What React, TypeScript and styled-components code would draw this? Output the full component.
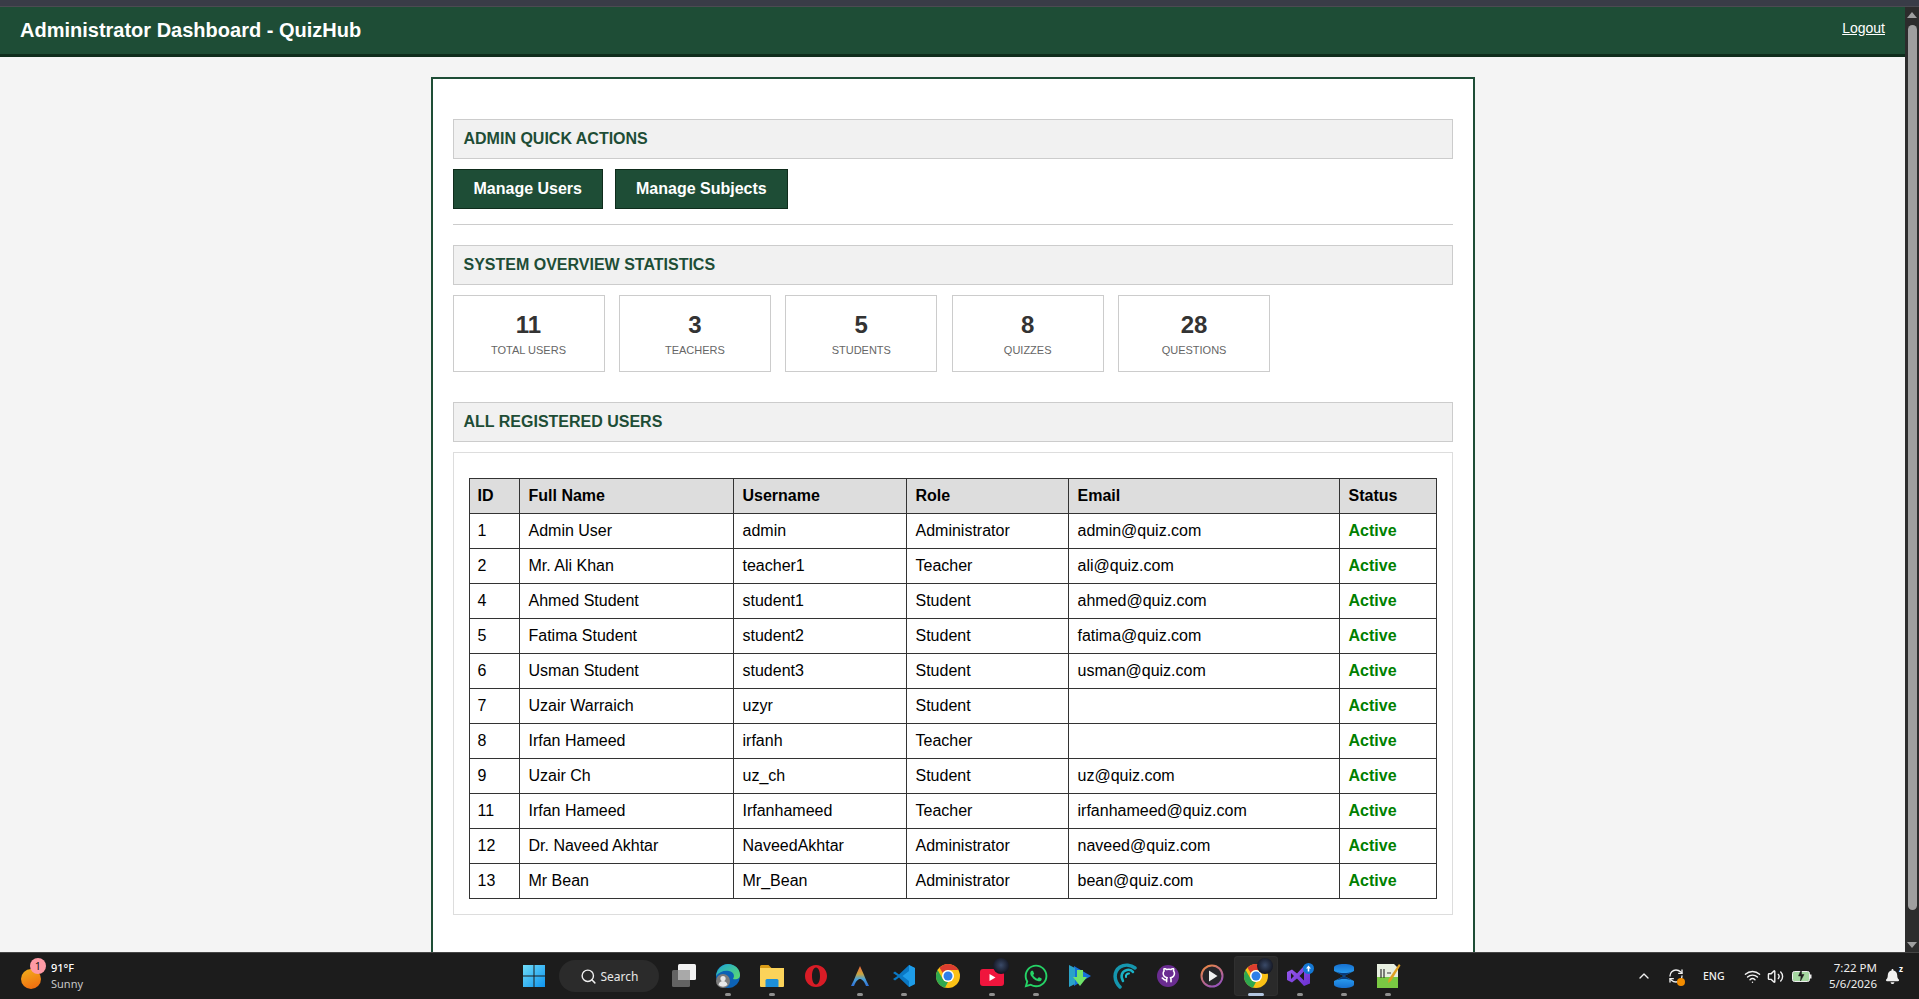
import React from "react";
import styled, { createGlobalStyle } from "styled-components";
import { FaWhatsapp, FaBell } from "react-icons/fa";
import { FiGithub } from "react-icons/fi";
import { ChevronUp, RefreshCw, Search, Wifi, Volume2 } from "lucide-react";

const GlobalStyle = createGlobalStyle`
  html, body {
    margin: 0;
    padding: 0;
    height: 100%;
    overflow: hidden;
    background: #1c1c1c;
  }
  * {
    box-sizing: border-box;
  }
`;

const green = "#1e4d36";
const darkGreen = "#0f2c1c";

const Screen = styled.div`
  width: 100vw;
  height: 100vh;
  display: flex;
  flex-direction: column;
  overflow: hidden;
  font-family: "Liberation Sans", Arial, sans-serif;
`;
const TopStrip = styled.div`
  flex: 0 0 7px;
  background: #393c47;
  border-bottom: 1px solid #4b4b52;
`;
const Viewport = styled.div`
  flex: 1;
  min-height: 0;
  display: flex;
`;
const Page = styled.div`
  flex: 1;
  min-width: 0;
  overflow: hidden;
  background: #f4f4f4;
`;
const Header = styled.header`
  height: 50px;
  display: flex;
  align-items: flex-start;
  justify-content: space-between;
  padding: 12px 20px;
  background: ${green};
  border-bottom: 3px solid ${darkGreen};
`;
const Title = styled.h1`
  margin: 0;
  font-size: 20px;
  line-height: 23px;
  font-weight: bold;
  color: #fff;
`;
const LogoutLink = styled.a`
  font-size: 14px;
  line-height: 16px;
  margin-top: 1px;
  color: #fff;
  text-decoration: underline;
`;
const Panel = styled.main`
  width: 1044px;
  margin: 20px auto 0;
  padding: 20px 20px 60px;
  background: #fff;
  border: 2px solid ${green};
`;
const SectionTitle = styled.h2<{ $top: number }>`
  margin: ${({ $top }) => $top}px 0 10px;
  height: 40px;
  padding: 10px;
  font-size: 16px;
  line-height: 18px;
  font-weight: bold;
  text-transform: uppercase;
  color: ${green};
  background: #f1f1f1;
  border: 1px solid #ccc;
`;
const Actions = styled.div`
  display: flex;
  gap: 12px;
`;
const ActionButton = styled.a`
  height: 40px;
  padding: 10px 20px;
  font-size: 16px;
  line-height: 18px;
  font-weight: bold;
  color: #fff;
  background: ${green};
  border: 1px solid ${darkGreen};
`;
const Divider = styled.hr`
  margin: 15px 0 0;
  height: 1px;
  border: 0;
  background: #ccc;
`;
const StatRow = styled.div`
  display: flex;
  gap: 14.4px;
`;
const StatCard = styled.div`
  width: 152px;
  height: 77px;
  padding-top: 15px;
  text-align: center;
  background: #fff;
  border: 1px solid #ccc;
`;
const StatValue = styled.div`
  font-size: 24px;
  line-height: 28px;
  font-weight: bold;
  color: #333;
`;
const StatLabel = styled.div`
  margin-top: 5px;
  font-size: 11px;
  line-height: 13px;
  color: #666;
`;
const TableCard = styled.section`
  padding: 25px 15px 15px;
  background: #fff;
  border: 1px solid #ddd;
`;
const UsersTable = styled.table`
  width: 967px;
  table-layout: fixed;
  border-collapse: collapse;
  font-size: 16px;
  line-height: 18px;
  color: #000;
`;
const HeadCell = styled.th<{ $w: number }>`
  width: ${({ $w }) => $w}px;
  padding: 8px;
  text-align: left;
  font-weight: bold;
  background: #ddd;
  border: 1px solid #333;
  th + & {
    padding-left: 9px;
  }
`;
const Cell = styled.td`
  padding: 8px;
  border: 1px solid #333;
  td + & {
    padding-left: 9px;
  }
`;
const StatusCell = styled(Cell)`
  font-weight: bold;
  color: #008000;
`;

const ScrollTrack = styled.div`
  flex: 0 0 14px;
  display: flex;
  flex-direction: column;
  align-items: center;
  padding-top: 5px;
  background: #2c2c2c;
`;
const ArrowUp = styled.div`
  width: 0;
  height: 0;
  border-left: 5px solid transparent;
  border-right: 5px solid transparent;
  border-bottom: 6px solid #9f9f9f;
`;
const ArrowDown = styled.div`
  width: 0;
  height: 0;
  margin-top: 32px;
  border-left: 5px solid transparent;
  border-right: 5px solid transparent;
  border-top: 6px solid #9f9f9f;
`;
const ScrollThumb = styled.div`
  width: 9px;
  height: 885px;
  margin-top: 7px;
  border-radius: 5px;
  background: #9f9f9f;
`;

const Taskbar = styled.footer`
  flex: 0 0 47px;
  display: grid;
  grid-template-columns: 512px auto 1fr;
  background: #1c1c1c;
  border-top: 1px solid #454545;
  font-family: "Noto Sans", "Open Sans", sans-serif;
  color: #fff;
`;
const Weather = styled.div`
  display: flex;
  align-items: center;
  padding-left: 21px;
`;
const SunIcon = styled.div`
  position: relative;
  width: 20px;
  height: 20px;
  margin-right: 10px;
  margin-top: 6px;
  border-radius: 50%;
  background: linear-gradient(160deg, #f2b11c, #f0650f);
`;
const Badge = styled.span`
  position: absolute;
  top: -11px;
  left: 9px;
  width: 16px;
  height: 16px;
  border-radius: 50%;
  background: #ff9aa5;
  color: #1a1a1a;
  font-size: 11px;
  line-height: 16px;
  text-align: center;
`;
const WeatherText = styled.div`
  display: flex;
  flex-direction: column;
  font-size: 11px;
  line-height: 16px;
  font-weight: 500;
`;
const WeatherSub = styled.span`
  font-weight: 400;
  color: #c8c8c8;
`;
const TaskIcons = styled.div`
  display: flex;
  align-items: center;
`;
const TaskSlot = styled.div<{ $active?: boolean }>`
  position: relative;
  width: 44px;
  height: 40px;
  margin-top: -1px;
  display: flex;
  align-items: center;
  justify-content: center;
  border-radius: 4px;
  background: ${({ $active }) => ($active ? "#2a2a2a" : "transparent")};
  box-shadow: ${({ $active }) => ($active ? "inset 0 0 0 1px #303030" : "none")};
`;
const Running = styled.span<{ $active?: boolean }>`
  position: absolute;
  bottom: 0;
  left: 50%;
  width: ${({ $active }) => ($active ? 16 : 6)}px;
  height: 3px;
  margin-left: ${({ $active }) => ($active ? -8 : -3)}px;
  border-radius: 2px;
  background: ${({ $active }) => ($active ? "#b4c6e0" : "#8f8f8f")};
`;
const SearchPill = styled.div`
  width: 100px;
  height: 32px;
  margin: 0 3px;
  display: flex;
  align-items: center;
  justify-content: center;
  gap: 4px;
  border-radius: 16px;
  background: #2b2b2b;
  font-size: 12px;
  color: #e8e8e8;
`;
const GithubDisc = styled.div`
  width: 22px;
  height: 22px;
  display: flex;
  align-items: center;
  justify-content: center;
  border-radius: 50%;
  background: #6a2c91;
  color: #fff;
`;
const Tray = styled.div`
  display: flex;
  align-items: center;
  justify-content: flex-end;
  padding-right: 15px;
`;
const TraySlot = styled.div<{ $w: number; $after: number }>`
  position: relative;
  width: ${({ $w }) => $w}px;
  margin-right: ${({ $after }) => $after}px;
  display: flex;
  align-items: center;
  justify-content: center;
`;
const OrangeDot = styled.span`
  position: absolute;
  right: 3px;
  bottom: -2px;
  width: 8px;
  height: 8px;
  border-radius: 50%;
  background: #f28c00;
`;
const LangText = styled.span`
  width: 23px;
  margin-right: 15px;
  font-size: 10.5px;
  font-weight: 500;
  color: #f0f0f0;
`;
const Clock = styled.div`
  width: 56px;
  margin-right: 3px;
  text-align: right;
  font-size: 11.5px;
  line-height: 16px;
  color: #eee;
`;
const Snooze = styled.span`
  position: absolute;
  top: -5px;
  right: 1px;
  font-size: 8px;
  line-height: 9px;
  font-weight: bold;
  color: #fff;
`;
const AvatarDot = styled.span`
  position: absolute;
  top: 2px;
  right: 5px;
  width: 16px;
  height: 16px;
  border-radius: 50%;
  background: radial-gradient(circle at 50% 45%, #3a4a68, #12141f 75%);
`;

const WindowsIcon = () => (
  <svg width="24" height="24" viewBox="0 0 24 24">
    <defs>
      <linearGradient id="win" x1="0" y1="0" x2="1" y2="1">
        <stop offset="0" stopColor="#6fdcf8" />
        <stop offset="1" stopColor="#0d93ee" />
      </linearGradient>
    </defs>
    <path d="M1 1h10.5v10.5H1zM12.5 1H23v10.5H12.5zM1 12.5h10.5V23H1zM12.5 12.5H23V23H12.5z" fill="url(#win)" />
  </svg>
);
const TaskViewIcon = () => (
  <svg width="26" height="26" viewBox="0 0 26 26">
    <rect x="1" y="7" width="18" height="17" rx="1.5" fill="#636363" />
    <rect x="7" y="1" width="18" height="16" rx="1.5" fill="#f2f2f2" />
    <path d="M7 7h12v10H7z" fill="#a9a9a9" />
  </svg>
);
const EdgeIcon = () => (
  <svg width="26" height="26" viewBox="0 0 26 26">
    <defs>
      <linearGradient id="edgeTop" x1="0" y1="0" x2="1" y2="1">
        <stop offset="0" stopColor="#1ba5d8" />
        <stop offset="1" stopColor="#5fdc6b" />
      </linearGradient>
    </defs>
    <circle cx="13" cy="13" r="12" fill="#0c62b5" />
    <path d="M1 13C2 5 8 1 13 1c7 0 12 5 12 11 0 4-4 5-7 4 2-3 1-7-4-8C9 7 4 9 1 13z" fill="url(#edgeTop)" />
    <circle cx="8" cy="18" r="7" fill="#7c7c7c" />
    <circle cx="8" cy="15.5" r="2.6" fill="#e8e8e8" />
    <path d="M3.5 22c.6-3 2.4-4 4.5-4s3.900 1 4.500 4a7 7 0 0 1-9 0z" fill="#e8e8e8" />
  </svg>
);
const FolderIcon = () => (
  <svg width="26" height="26" viewBox="0 0 26 26">
    <path d="M1 3.500A1.500 1.500 0 0 1 2.500 2h7l3 3H1z" fill="#d99b16" />
    <path d="M1 5h24v18a1 1 0 0 1-1 1H2a1 1 0 0 1-1-1z" fill="#fbd35a" />
    <path d="M8 16h10a1.500 1.500 0 0 1 1.500 1.500V24h-13v-6.500A1.500 1.500 0 0 1 8 16z" fill="#1c8fd8" />
  </svg>
);
const OperaIcon = () => (
  <svg width="24" height="24" viewBox="0 0 24 24">
    <path fillRule="evenodd" d="M12 1c6.500 0 11 5 11 11s-4.500 11-11 11S1 18 1 12 5.500 1 12 1zm0 2.500c-2.500 0-4 3.800-4 8.500s1.500 8.500 4 8.500 4-3.800 4-8.500-1.500-8.500-4-8.500z" fill="#d81c26" />
  </svg>
);
const ArcIcon = () => (
  <svg width="22" height="22" viewBox="0 0 22 22">
    <defs>
      <linearGradient id="arc" x1="0.5" y1="0" x2="0.5" y2="1">
        <stop offset="0" stopColor="#f0663c" />
        <stop offset="0.4" stopColor="#c9a63e" />
        <stop offset="0.65" stopColor="#4aa3d8" />
        <stop offset="1" stopColor="#2f6fd8" />
      </linearGradient>
    </defs>
    <path d="M11 1 L7 10 C5.500 14 3.500 18 2 21 L5 21 C7 16 9 14 11 14 C13 14 15 16 17 21 L20 21 C18.500 18 16.500 14 15 10 Z" fill="url(#arc)" />
  </svg>
);
const VsCodeIcon = () => (
  <svg width="24" height="24" viewBox="0 0 24 24">
    <path d="M17 1l6 3v16l-6 3-10-9.500-4 3L1 15l4.500-3L1 9l2-1.500 4 3z" fill="#0a78c4" />
    <path d="M17 1l6 3v16l-6 3zM17 7l-6.500 5 6.500 5z" fill="#1e9ce8" fillRule="evenodd" />
  </svg>
);
const ChromeIcon = () => (
  <svg width="24" height="24" viewBox="0 0 24 24">
    <circle cx="12" cy="12" r="12" fill="#fbc116" />
    <path d="M12 0a12 12 0 0 1 10.400 6H12a6 6 0 0 0-5.200 3L3.500 3.800A12 12 0 0 1 12 0z" fill="#dc3d2f" />
    <path d="M1.600 6l5.200 9a6 6 0 0 0 5.200 3l-3.100 5.700A12 12 0 0 1 1.600 6z" fill="#2fa84f" />
    <circle cx="12" cy="12" r="6" fill="#fff" />
    <circle cx="12" cy="12" r="4.500" fill="#2f7fe8" />
  </svg>
);
const YoutubeIcon = () => (
  <svg width="24" height="24" viewBox="0 0 24 24">
    <rect x="0" y="5" width="24" height="17" rx="3" fill="#f0153d" />
    <path d="M9.500 10l6 3.500-6 3.500z" fill="#fff" />
  </svg>
);
const DownloadPlayIcon = () => (
  <svg width="24" height="24" viewBox="0 0 24 24">
    <path d="M6 2l17 10L6 22z" fill="#1670d8" />
    <path d="M1 1l6 3v16l-6 3z" fill="#2aa3c8" />
    <path d="M9 6h6v7h4l-7 9-7-9h4z" fill="#6fe36a" />
  </svg>
);
const SwirlIcon = () => (
  <svg width="26" height="26" viewBox="0 0 26 26" fill="none" strokeLinecap="round">
    <path d="M9 24C3 18 2 9 9 4c5-3 11-2 15 1" stroke="#1596ae" strokeWidth="3.500" />
    <path d="M12 18C9 13 11 8 16 7c3-.5 5 .5 6 2" stroke="#1ab0c4" strokeWidth="2.500" />
    <path d="M15 14c-.5-2 1-3.500 3-3.500" stroke="#22c0d2" strokeWidth="2" />
  </svg>
);
const PlayRingIcon = () => (
  <svg width="24" height="24" viewBox="0 0 24 24">
    <defs>
      <linearGradient id="ring" x1="0" y1="0" x2="0.6" y2="1">
        <stop offset="0" stopColor="#f08a3c" />
        <stop offset="1" stopColor="#9a55b8" />
      </linearGradient>
    </defs>
    <circle cx="12" cy="12" r="10.500" fill="#26262a" stroke="url(#ring)" strokeWidth="2" />
    <path d="M9 6.500l8.500 5.500L9 17.500z" fill="#f0f0f0" />
  </svg>
);
const VisualStudioIcon = () => (
  <svg width="28" height="26" viewBox="0 0 28 26">
    <defs>
      <linearGradient id="vs" x1="0" y1="0" x2="1" y2="1">
        <stop offset="0" stopColor="#9a5cf0" />
        <stop offset="1" stopColor="#6a2fd0" />
      </linearGradient>
    </defs>
    <path d="M1 9l5-2.500 5 4L18 3l6 2.500v15L18 23l-7-7.500-5 4L1 17z" fill="url(#vs)" />
    <path d="M5 10v6l3-3zM18 8.500L13.500 13l4.500 4.500z" fill="#1c1c1c" />
    <circle cx="22.500" cy="5.500" r="5.500" fill="#1478d4" />
    <path d="M22.500 2.500l2.500 3h-1.700v3h-1.600v-3H20z" fill="#fff" />
  </svg>
);
const BlueKnotIcon = () => (
  <svg width="22" height="26" viewBox="0 0 22 26">
    <defs>
      <linearGradient id="knot" x1="0" y1="0" x2="0" y2="1">
        <stop offset="0" stopColor="#1670d0" />
        <stop offset="0.5" stopColor="#2ea8f8" />
        <stop offset="1" stopColor="#1670d0" />
      </linearGradient>
    </defs>
    <path d="M1 4.500C1 2.500 5.500 1 11 1s10 1.500 10 3.500V8L11 13l10 5v3.500c0 2-4.500 3.500-10 3.500S1 23.500 1 21.500V18l10-5L1 8z" fill="url(#knot)" />
    <path d="M3 8.500c3 2 5.500 3.500 8 4.500 2.500-1 5-2.500 8-4.500-2 1-5 1.500-8 1.500s-6-.5-8-1.500zM3 17.500c3-2 5.500-3.500 8-4.500 2.500 1 5 2.500 8 4.500-2-1-5-1.500-8-1.500s-6 .5-8 1.500z" fill="#0a3a78" />
  </svg>
);
const NotepadIcon = () => (
  <svg width="26" height="26" viewBox="0 0 26 26">
    <path d="M2 1h17l4 4v20H2z" fill="#e8efe0" />
    <path d="M2 14h21v11H2z" fill="#7ac943" />
    <path d="M6 6v9M9 6v9" stroke="#333" strokeWidth="1.200" />
    <path d="M12 10h4" stroke="#555" strokeWidth="1.200" />
    <path d="M24 1l1.500 1.500L16 18l-3 2 .5-3.500z" fill="#e0a020" />
  </svg>
);
const BatteryIcon = () => (
  <svg width="20" height="14" viewBox="0 0 20 14">
    <rect x="0.500" y="2.500" width="17" height="10" rx="2" fill="#a5d6a0" stroke="#eee" />
    <rect x="18" y="5.500" width="1.500" height="4" fill="#eee" />
    <path d="M9.500 0L6.500 7H9l-.5 5L12 5.500H9.500z" fill="#1c1c1c" stroke="#1c1c1c" strokeWidth="0.500" />
  </svg>
);

const STATS = [
  { value: 11, label: "TOTAL USERS" },
  { value: 3, label: "TEACHERS" },
  { value: 5, label: "STUDENTS" },
  { value: 8, label: "QUIZZES" },
  { value: 28, label: "QUESTIONS" },
];

const COLUMNS = [
  { name: "ID", w: 50 },
  { name: "Full Name", w: 214 },
  { name: "Username", w: 173 },
  { name: "Role", w: 162 },
  { name: "Email", w: 271 },
  { name: "Status", w: 97 },
];

const USERS = [
  [1, "Admin User", "admin", "Administrator", "admin@quiz.com"],
  [2, "Mr. Ali Khan", "teacher1", "Teacher", "ali@quiz.com"],
  [4, "Ahmed Student", "student1", "Student", "ahmed@quiz.com"],
  [5, "Fatima Student", "student2", "Student", "fatima@quiz.com"],
  [6, "Usman Student", "student3", "Student", "usman@quiz.com"],
  [7, "Uzair Warraich", "uzyr", "Student", ""],
  [8, "Irfan Hameed", "irfanh", "Teacher", ""],
  [9, "Uzair Ch", "uz_ch", "Student", "uz@quiz.com"],
  [11, "Irfan Hameed", "Irfanhameed", "Teacher", "irfanhameed@quiz.com"],
  [12, "Dr. Naveed Akhtar", "NaveedAkhtar", "Administrator", "naveed@quiz.com"],
  [13, "Mr Bean", "Mr_Bean", "Administrator", "bean@quiz.com"],
];

function App() {
  return (
    <Screen>
      <GlobalStyle />
      <TopStrip />
      <Viewport>
        <Page>
          <Header>
            <Title>Administrator Dashboard - QuizHub</Title>
            <LogoutLink>Logout</LogoutLink>
          </Header>
          <Panel>
            <SectionTitle $top={20}>Admin Quick Actions</SectionTitle>
            <Actions>
              <ActionButton>Manage Users</ActionButton>
              <ActionButton>Manage Subjects</ActionButton>
            </Actions>
            <Divider />
            <SectionTitle $top={20}>System Overview Statistics</SectionTitle>
            <StatRow>
              {STATS.map((s) => (
                <StatCard key={s.label}>
                  <StatValue>{s.value}</StatValue>
                  <StatLabel>{s.label}</StatLabel>
                </StatCard>
              ))}
            </StatRow>
            <SectionTitle $top={30}>All Registered Users</SectionTitle>
            <TableCard>
              <UsersTable>
                <thead>
                  <tr>
                    {COLUMNS.map((c) => (
                      <HeadCell key={c.name} $w={c.w}>
                        {c.name}
                      </HeadCell>
                    ))}
                  </tr>
                </thead>
                <tbody>
                  {USERS.map((u) => (
                    <tr key={u[0]}>
                      {u.map((v, i) => (
                        <Cell key={i}>{v}</Cell>
                      ))}
                      <StatusCell>Active</StatusCell>
                    </tr>
                  ))}
                </tbody>
              </UsersTable>
            </TableCard>
          </Panel>
        </Page>
        <ScrollTrack>
          <ArrowUp />
          <ScrollThumb />
          <ArrowDown />
        </ScrollTrack>
      </Viewport>
      <Taskbar>
        <Weather>
          <SunIcon>
            <Badge>1</Badge>
          </SunIcon>
          <WeatherText>
            91°F
            <WeatherSub>Sunny</WeatherSub>
          </WeatherText>
        </Weather>
        <TaskIcons>
          <TaskSlot>
            <WindowsIcon />
          </TaskSlot>
          <SearchPill>
            <Search size={17} color="#f0f0f0" />
            Search
          </SearchPill>
          <TaskSlot>
            <TaskViewIcon />
          </TaskSlot>
          <TaskSlot>
            <EdgeIcon />
            <Running />
          </TaskSlot>
          <TaskSlot>
            <FolderIcon />
            <Running />
          </TaskSlot>
          <TaskSlot>
            <OperaIcon />
          </TaskSlot>
          <TaskSlot>
            <ArcIcon />
            <Running />
          </TaskSlot>
          <TaskSlot>
            <VsCodeIcon />
            <Running />
          </TaskSlot>
          <TaskSlot>
            <ChromeIcon />
          </TaskSlot>
          <TaskSlot>
            <YoutubeIcon />
            <AvatarDot />
            <Running />
          </TaskSlot>
          <TaskSlot>
            <FaWhatsapp size={26} color="#25d366" />
            <Running />
          </TaskSlot>
          <TaskSlot>
            <DownloadPlayIcon />
          </TaskSlot>
          <TaskSlot>
            <SwirlIcon />
          </TaskSlot>
          <TaskSlot>
            <GithubDisc>
              <FiGithub size={15} strokeWidth={2.5} />
            </GithubDisc>
          </TaskSlot>
          <TaskSlot>
            <PlayRingIcon />
          </TaskSlot>
          <TaskSlot $active>
            <ChromeIcon />
            <AvatarDot />
            <Running $active />
          </TaskSlot>
          <TaskSlot>
            <VisualStudioIcon />
            <Running />
          </TaskSlot>
          <TaskSlot>
            <BlueKnotIcon />
            <Running />
          </TaskSlot>
          <TaskSlot>
            <NotepadIcon />
            <Running />
          </TaskSlot>
        </TaskIcons>
        <Tray>
          <TraySlot $w={24} $after={8}>
            <ChevronUp size={16} color="#f0f0f0" />
          </TraySlot>
          <TraySlot $w={24} $after={15}>
            <RefreshCw size={16} color="#f0f0f0" />
            <OrangeDot />
          </TraySlot>
          <LangText>ENG</LangText>
          <TraySlot $w={22} $after={1}>
            <Wifi size={17} color="#f0f0f0" />
          </TraySlot>
          <TraySlot $w={22} $after={4}>
            <Volume2 size={17} color="#f0f0f0" />
          </TraySlot>
          <TraySlot $w={24} $after={7}>
            <BatteryIcon />
          </TraySlot>
          <Clock>
            7:22 PM
            <br />
            5/6/2026
          </Clock>
          <TraySlot $w={24} $after={0}>
            <FaBell size={15} color="#f0f0f0" />
            <Snooze>z</Snooze>
          </TraySlot>
        </Tray>
      </Taskbar>
    </Screen>
  );
}

export default App;
